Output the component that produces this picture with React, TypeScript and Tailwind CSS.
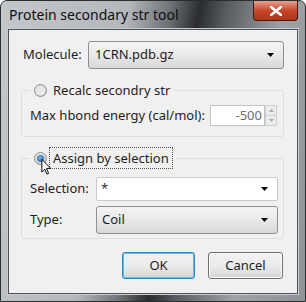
import React from "react";

const font = { fontFamily: '"Noto Sans", "Open Sans", sans-serif' };

function Arrow() {
  return (
    <svg width="7" height="4" viewBox="0 0 7 4" className="shrink-0">
      <path d="M0 0h7L3.5 4z" fill="#000" />
    </svg>
  );
}

function Radio({ checked }: { checked?: boolean }) {
  return (
    <span className="flex size-[13px] shrink-0 items-center justify-center rounded-full border border-[#8a8e92] bg-gradient-to-br from-[#eeeeee] to-[#c8c8c8]">
      {checked ? (
        <span className="size-[7px] rounded-full border border-[#1e5a96] bg-gradient-to-br from-[#8fd3ff] to-[#1c6fc0]" />
      ) : (
        <span className="size-[9px] rounded-full bg-gradient-to-br from-[#dcdcdc] to-[#f4f4f4]" />
      )}
    </span>
  );
}

function Cursor() {
  return (
    <svg width="11" height="16" viewBox="0 0 12 19" className="absolute left-[11px] top-[12px]">
      <path
        d="M0.5 0.5v15l3.5-3.5 2.5 6 2-1-2.5-5.8h5z"
        fill="#fff"
        stroke="#000"
        strokeWidth="1.1"
        strokeLinejoin="round"
      />
    </svg>
  );
}

export default function App() {
  return (
    <div
      className="relative h-[302px] w-[306px] overflow-hidden rounded-t-[7px] border border-[#2b2e31] bg-[linear-gradient(100deg,#c3c7cb_0%,#b4b8bc_36%,#6d7074_48%,#2a2c2e_56%,#5a5e62_64%,#9ea2a6_80%,#8f9397_100%)] text-[13px] text-[#1e1e1e]"
      style={font}
    >
      <div className="flex h-[28px] items-start justify-between">
        <span className="pl-[8px] pt-[5px] text-[14px] leading-[18px] text-[#101010]">
          Protein secondary str tool
        </span>
        <div className="mr-[7px] flex h-[20px] w-[45px] items-center justify-center rounded-b-[4px] border border-t-0 border-[#3b1a14] bg-gradient-to-b from-[#e4a08e] via-[#c8452a] to-[#b13617]">
          <svg width="12" height="10" viewBox="0 0 12 10">
            <path d="M1 1l10 8M11 1L1 9" stroke="#fff" strokeWidth="2.6" strokeLinecap="square" />
          </svg>
        </div>
      </div>

      <div className="mx-[7px] flex h-[265px] flex-col border border-[#4f5357] bg-[#f0f0f0] pl-[12px] pr-[13px] shadow-[0_0_0_1px_#c9cdd1]">
        <div className="mt-[11px] flex items-center">
          <span className="ml-[2px] w-[65px]">Molecule:</span>
          <div className="flex h-[28px] flex-1 items-center justify-between rounded-[3px] border border-[#8e8f8f] bg-gradient-to-b from-[#f4f4f4] via-[#e9e9e9] to-[#d8d8d8] pl-[6px] pr-[9px]">
            <span>1CRN.pdb.gz</span>
            <Arrow />
          </div>
        </div>

        <fieldset className="mt-[12px] h-[56px] rounded-[3px] border border-[#d5dfe5] pl-[8px] pr-[6px]">
          <legend className="flex items-center gap-[6px] px-[4px] leading-[18px]">
            <Radio />
            <span>Recalc secondry str</span>
          </legend>
          <div className="mt-[6px] flex items-center">
            <span className="flex-1">Max hbond energy (cal/mol):</span>
            <div className="flex h-[21px] items-stretch">
              <div className="flex w-[55px] items-center justify-end border border-[#c0c4c8] bg-white pr-[2px] text-[#6d6d6d]">
                -500
              </div>
              <div className="flex w-[12px] flex-col">
                <div className="flex flex-1 items-center justify-center border border-[#d0d0d0] bg-[#ececec]">
                  <svg width="5" height="3" viewBox="0 0 5 3">
                    <path d="M0 3h5L2.5 0z" fill="#a8a8a8" />
                  </svg>
                </div>
                <div className="flex flex-1 items-center justify-center border border-t-0 border-[#d0d0d0] bg-[#ececec]">
                  <svg width="5" height="3" viewBox="0 0 5 3">
                    <path d="M0 0h5L2.5 3z" fill="#a8a8a8" />
                  </svg>
                </div>
              </div>
            </div>
          </div>
        </fieldset>

        <fieldset className="mt-[10px] h-[92px] rounded-[3px] border border-[#d5dfe5] pl-[8px] pr-[5px]">
          <legend className="relative flex items-center gap-[2px] px-[4px] leading-[18px]">
            <Radio checked />
            <span className="border border-dotted border-[#555] px-[3px] py-[1px]">Assign by selection</span>
            <Cursor />
          </legend>
          <div className="mt-[8px] flex items-center">
            <span className="w-[66px]">Selection:</span>
            <div className="flex h-[24px] flex-1 items-center justify-between rounded-[2px] border border-[#c7cbd0] bg-white pl-[4px] pr-[9px]">
              <span className="text-[#333]">*</span>
              <Arrow />
            </div>
          </div>
          <div className="mt-[5px] flex items-center">
            <span className="w-[66px]">Type:</span>
            <div className="flex h-[28px] flex-1 items-center justify-between rounded-[3px] border border-[#8e8f8f] bg-gradient-to-b from-[#f4f4f4] via-[#e9e9e9] to-[#d8d8d8] pl-[5px] pr-[9px]">
              <span>Coil</span>
              <Arrow />
            </div>
          </div>
        </fieldset>

        <div className="mt-[13px] flex justify-end gap-[13px] pr-[1px]">
          <div className="flex h-[27px] w-[73px] items-center justify-center rounded-[3px] border border-[#3c7fb1] bg-gradient-to-b from-[#f2f2f2] via-[#ebebeb] to-[#d6d6d6] shadow-[inset_0_0_0_1px_#4fc4f5]">
            OK
          </div>
          <div className="flex h-[27px] w-[75px] items-center justify-center rounded-[3px] border border-[#707070] bg-gradient-to-b from-[#f2f2f2] via-[#ebebeb] to-[#d6d6d6] shadow-[inset_0_0_0_1px_#fcfcfc]">
            Cancel
          </div>
        </div>
      </div>
    </div>
  );
}
